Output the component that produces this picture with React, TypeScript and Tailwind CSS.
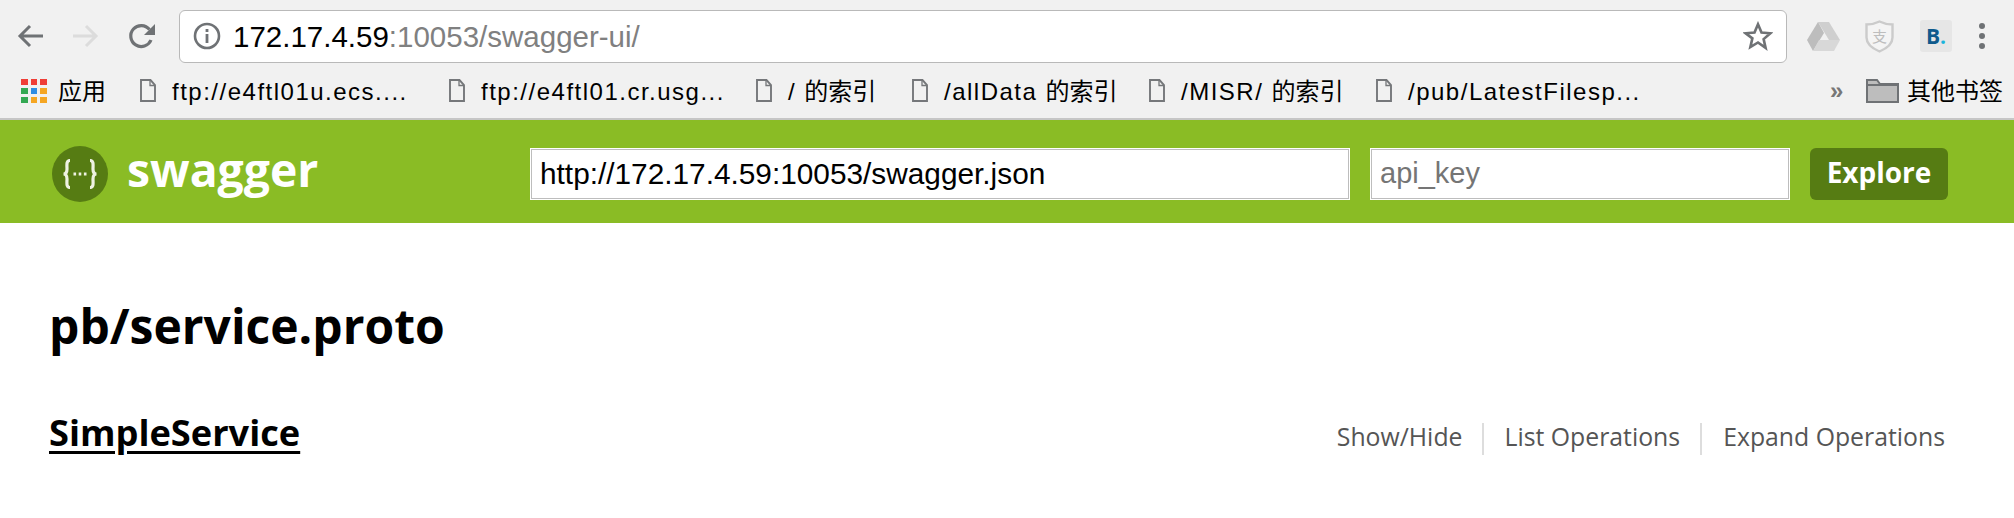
const APP_COLORS = [
  'bg-[#ef3e36]', 'bg-[#ef3e36]', 'bg-[#ef3e36]',
  'bg-[#34a853]', 'bg-[#2f8de4]', 'bg-[#f5a623]',
  'bg-[#34a853]', 'bg-[#f5a623]', 'bg-[#f5a623]',
];

function FileIcon() {
  return (
    <svg width="16" height="23" viewBox="0 0 16 23" fill="none" stroke="#75777a" strokeWidth="1.9" className="shrink-0">
      <path d="M1 1h9.500L15 6v16H1z" />
      <path d="M10 1v5.500h5" strokeWidth="1.3" />
    </svg>
  );
}

function Bookmark({ label, cjk, className }: { label: string; cjk?: string; className: string }) {
  return (
    <div className={`flex items-center gap-[16px] ${className}`}>
      <FileIcon />
      <span className="whitespace-pre pt-[2px]">
        <span className="tracking-[1.5px]">{label}</span>
        {cjk}
      </span>
    </div>
  );
}

function BrowserBar() {
  return (
    <div className="bg-[#f1f1f1] border-b-2 border-[#c6c6c6] h-[120px] font-['Liberation_Sans','Noto_Sans_CJK_SC',sans-serif]">
      <div className="flex items-center h-[63px] pt-[9px]">
        <svg width="26" height="24" viewBox="0 0 26 24" fill="none" stroke="#6f7275" strokeWidth="3" className="ml-[17px]">
          <path d="M26 12H3M13 2 3 12l10 10" />
        </svg>
        <svg width="26" height="24" viewBox="0 0 26 24" fill="none" stroke="#dcdcdc" strokeWidth="3" className="ml-[30px]">
          <path d="M0 12h23M13 2l10 10-10 10" />
        </svg>
        <svg width="28" height="28" viewBox="0 0 28 28" fill="none" className="ml-[29px]">
          <path d="M23 18a10.500 10.500 0 1 1-1.500-10.500" stroke="#6f7275" strokeWidth="3.2" />
          <path d="M27 2v11H16z" fill="#6f7275" />
        </svg>
        <div className="ml-[23px] w-[1608px] h-[53px] bg-white border border-[#b9b9b9] rounded-[6px] flex items-center pl-[13px] pr-[13px]">
          <svg width="28" height="28" viewBox="0 0 28 28" fill="none" className="shrink-0">
            <circle cx="14" cy="14" r="12" stroke="#6f7275" strokeWidth="2.6" />
            <rect x="12.600" y="12" width="2.800" height="9" fill="#6f7275" />
            <rect x="12.600" y="7" width="2.800" height="3" fill="#6f7275" />
          </svg>
          <span className="ml-[12px] pt-[3px] text-[29.500px] text-black whitespace-nowrap">
            172.17.4.59<span className="text-[#808080]">:10053/swagger-ui/</span>
          </span>
          <svg width="30" height="30" viewBox="0 0 24 24" fill="none" stroke="#6f7275" strokeWidth="2.100" strokeLinejoin="miter" className="ml-auto">
            <path d="m12 2.600 2.800 6.600 7.100.6-5.400 4.700 1.600 7L12 17.200l-6.100 3.700 1.600-7L2.100 9.800l7.100-.6z" />
          </svg>
        </div>
        <svg width="33" height="29" viewBox="0 0 33 29" className="ml-[20px]">
          <path d="M11 0h11l11 18H22z" fill="#cfcfcf" />
          <path d="M11 0 0 18l6 11 11-18z" fill="#bdbdbd" />
          <path d="M6 29h21l6-11H12z" fill="#d8d8d8" />
        </svg>
        <div className="ml-[25px] relative w-[29px] h-[33px]">
          <svg width="29" height="33" viewBox="0 0 29 33" fill="#f4f4f4" stroke="#cbcbcb" strokeWidth="2.400" className="absolute inset-0">
            <path d="M14.500 1.500c4 2 8 3 13 3v13c0 7-6 11-13 14-7-3-13-7-13-14v-13c5 0 9-1 13-3z" />
          </svg>
          <span className="absolute inset-0 flex items-center justify-center text-[15px] text-[#bdbdbd] font-['Noto_Sans_CJK_SC',sans-serif]">支</span>
        </div>
        <div className="ml-[26px] w-[32px] h-[32px] bg-[#e6e6e6] rounded-[3px] flex items-center justify-center font-['Open_Sans',sans-serif] font-bold text-[21px] leading-none text-[#0f5a8c]">
          B<span className="text-[#1ab4dc]">.</span>
        </div>
        <div className="ml-[27px] flex flex-col gap-[4px]">
          <div className="w-[6px] h-[6px] rounded-full bg-[#6f7275]" />
          <div className="w-[6px] h-[6px] rounded-full bg-[#6f7275]" />
          <div className="w-[6px] h-[6px] rounded-full bg-[#6f7275]" />
        </div>
      </div>
      <div className="flex items-center h-[55px] text-[24px] text-black">
        <div className="ml-[21px] grid grid-cols-3 gap-[3px] w-[26px] shrink-0">
          {APP_COLORS.map((c, i) => (
            <div key={i} className={`h-[6px] ${c}`} />
          ))}
        </div>
        <span className="ml-[11px] w-[82px] shrink-0 whitespace-nowrap pt-[2px]">应用</span>
        <Bookmark label="ftp://e4ftl01u.ecs...." className="w-[309px] shrink-0" />
        <Bookmark label="ftp://e4ftl01.cr.usg..." className="w-[307px] shrink-0" />
        <Bookmark label="/ " cjk="的索引" className="w-[156px] shrink-0" />
        <Bookmark label="/allData " cjk="的索引" className="w-[237px] shrink-0" />
        <Bookmark label="/MISR/ " cjk="的索引" className="w-[227px] shrink-0" />
        <Bookmark label="/pub/LatestFilesp..." className="w-[454px] shrink-0" />
        <span className="w-[36px] shrink-0 text-[#777] font-bold">»</span>
        <svg width="33" height="25" viewBox="0 0 33 25" fill="#bdbdbd" stroke="#6f7275" strokeWidth="2" className="shrink-0">
          <path d="M1 24V2h10l3 4h18v18z" />
          <path d="M1 7h31" fill="none" />
        </svg>
        <span className="ml-[8px] whitespace-nowrap pt-[2px]">其他书签</span>
      </div>
    </div>
  );
}

function SwaggerHeader() {
  return (
    <div className="h-[103px] bg-[#8abc25] flex items-center pl-[52px] pt-[5px] font-['Open_Sans',sans-serif]">
      <div className="w-[56px] h-[56px] rounded-full bg-[#567c13] flex items-center justify-center shrink-0">
        <svg width="36" height="30" viewBox="0 0 36 30" fill="none" stroke="#eef2e2" strokeWidth="3.200">
          <path d="M8 1.500C4 1.500 5 6 5 10c0 3-1 5-3.500 5C4 15 5 17 5 20c0 4-1 8.500 3 8.500" />
          <path d="M28 1.500c4 0 3 4.500 3 8.500 0 3 1 5 3.500 5-2.500 0-3.500 2-3.500 5 0 4 1 8.500-3 8.500" />
          <path d="M11.500 15h2.600M16.700 15h2.600M21.900 15h2.600" strokeWidth="3" />
        </svg>
      </div>
      <span className="ml-[19px] w-[403px] text-[46.300px] font-bold text-white leading-none pb-[8px]">swagger</span>
      <div className="w-[820px] h-[52px] bg-white border border-white shadow-[inset_0_0_0_1px_#bdbdbd] flex items-center pl-[9px] text-[29.800px] text-black font-['Liberation_Sans',sans-serif]">
        http://172.17.4.59:10053/swagger.json
      </div>
      <div className="ml-[20px] w-[420px] h-[52px] bg-white border border-white shadow-[inset_0_0_0_1px_#bdbdbd] flex items-center pl-[9px] text-[29px] text-[#757575] font-['Liberation_Sans',sans-serif]">
        api_key
      </div>
      <div className="ml-[20px] w-[138px] h-[52px] rounded-[6px] bg-[#567c13] text-white font-bold text-[28px] pb-[4px] flex items-center justify-center">
        Explore
      </div>
    </div>
  );
}

export default function App() {
  return (
    <div className="w-[2014px] h-[518px] bg-white overflow-hidden">
      <BrowserBar />
      <SwaggerHeader />
      <div className="pl-[49px] pr-[69px] font-['Open_Sans',sans-serif] text-black">
        <h1 className="mt-[73px] text-[48px] font-bold leading-[60px]">pb/service.proto</h1>
        <div className="mt-[53px] flex items-start justify-between">
          <h2 className="text-[36.200px] font-bold leading-[46px] underline underline-offset-[5px]">SimpleService</h2>
          <div className="flex items-center text-[24.800px] text-[#555] mt-[14px]">
            <span className="pr-[20px] border-r-2 border-[#ddd] leading-[26px] pb-[6px]">Show/Hide</span>
            <span className="px-[20px] border-r-2 border-[#ddd] leading-[26px] pb-[6px]">List Operations</span>
            <span className="pl-[21px] leading-[26px] pb-[6px]">Expand Operations</span>
          </div>
        </div>
      </div>
    </div>
  );
}
